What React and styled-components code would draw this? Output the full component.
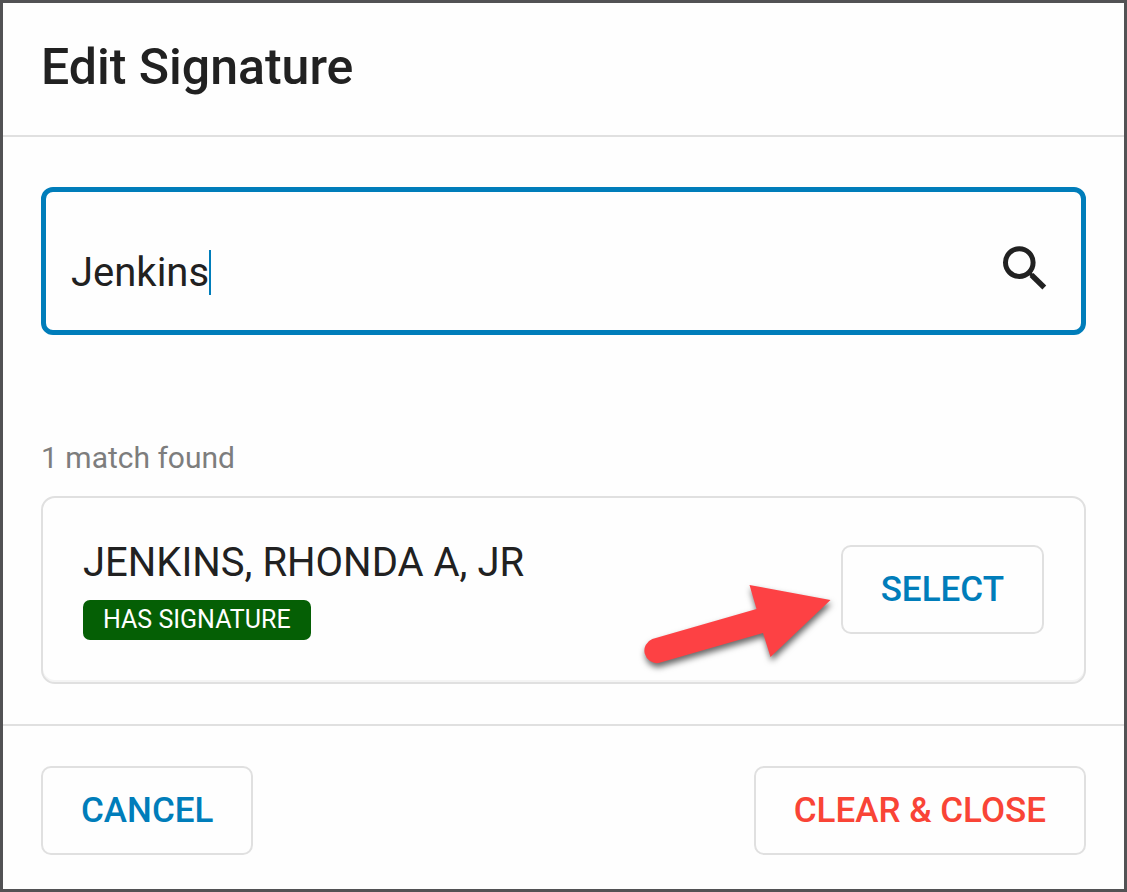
import { useState } from 'react';
import styled, { createGlobalStyle } from 'styled-components';

const people = [
  { id: 1, name: 'JENKINS, RHONDA A, JR', hasSignature: true },
];

const SearchIcon = () => (
  <IconSvg viewBox="0 0 60 60" aria-hidden="true">
    <circle cx="24.3" cy="23.6" r="13.8" strokeWidth="5" />
    <path d="M34 33.500L38 37.300" strokeWidth="3.5" />
    <path d="M36.500 36L49.300 48.500" strokeWidth="5.5" />
  </IconSvg>
);

const PointerArrow = () => (
  <ArrowSvg viewBox="0 0 200 90" aria-hidden="true">
    <path d="M108.500 0L189.500 15L129.500 72L122 48L17.700 78A12.500 12.500 0 0 1 11.300 54L115.500 24Z" />
  </ArrowSvg>
);

const App = () => {
  const [query, setQuery] = useState('Jenkins');

  const matches = people.filter((person) =>
    person.name.toLowerCase().includes(query.toLowerCase())
  );

  return (
    <>
      <GlobalStyle />
      <Dialog role="dialog" aria-labelledby="dialog-title">
        <Header>
          <Title id="dialog-title">Edit Signature</Title>
        </Header>
        <Body>
          <SearchField>
            <InputWrapper>
              <SearchInput
                value={query}
                onChange={(e) => setQuery(e.target.value)}
                aria-label="Search by name"
                id="search"
              />
              <Caret />
            </InputWrapper>
            <SearchIcon />
          </SearchField>
          <MatchCount>
            {matches.length} {matches.length === 1 ? 'match' : 'matches'} found
          </MatchCount>
          {matches.map((person) => (
            <ResultCard key={person.id}>
              <PersonInfo>
                <PersonName>{person.name}</PersonName>
                {person.hasSignature && <Badge>HAS SIGNATURE</Badge>}
              </PersonInfo>
              <SelectContainer>
                <PointerArrow />
                <Button type="button">SELECT</Button>
              </SelectContainer>
            </ResultCard>
          ))}
        </Body>
        <Footer>
          <Button type="button">CANCEL</Button>
          <Button type="button" $danger>CLEAR &amp; CLOSE</Button>
        </Footer>
      </Dialog>
    </>
  );
};

export default App;

const GlobalStyle = createGlobalStyle`
  * {
    box-sizing: border-box;
  }
  body {
    margin: 0;
    background-color: #fefefe;
    font-family: Roboto, "Liberation Sans", sans-serif;
    color: #212121;
  }
`;

const Dialog = styled.div`
  display: flex;
  flex-direction: column;
  min-height: 100vh;
  border: 3px solid #525254;
`;

const Header = styled.header`
  padding: 34px 38px 38px;
  border-bottom: 2px solid #e0e0e0;
`;

const Title = styled.h1`
  margin: 0;
  font-size: 50px;
  font-weight: 500;
  line-height: 60px;
`;

const Body = styled.main`
  flex: 1;
  padding: 50px 38px 40px;
`;

const SearchField = styled.label`
  display: flex;
  align-items: center;
  justify-content: space-between;
  padding: 47px 26px 31px 25px;
  border: 5px solid #007dba;
  border-radius: 12px;
`;

const InputWrapper = styled.span`
  display: flex;
  align-items: center;
  min-width: 0;
  padding-top: 6px;
`;

const SearchInput = styled.input`
  field-sizing: content;
  height: 54px;
  padding: 0;
  border: 0;
  outline: 0;
  background: none;
  font-family: inherit;
  font-size: 40px;
  color: inherit;
  caret-color: transparent;
`;

const Caret = styled.span`
  width: 2px;
  height: 45px;
  background-color: #007dba;
`;

const IconSvg = styled.svg`
  flex: none;
  width: 60px;
  height: 60px;
  fill: none;
  stroke: #212121;
`;

const MatchCount = styled.p`
  margin: 103px 0 18px;
  font-size: 30px;
  line-height: 40px;
  color: #7d7d7d;
`;

const ResultCard = styled.section`
  display: flex;
  align-items: center;
  justify-content: space-between;
  padding: 40px 40px 42px;
  border: 2px solid #e0e0e0;
  border-radius: 14px;
  box-shadow: inset 0 -2px 0 #f4f4f4;
`;

const PersonInfo = styled.div`
  display: flex;
  flex-direction: column;
  align-items: flex-start;
  gap: 12px;
`;

const PersonName = styled.div`
  font-size: 40px;
  line-height: 50px;
`;

const Badge = styled.span`
  padding: 0 20px;
  border-radius: 7px;
  background-color: #055f05;
  color: #fff;
  font-size: 25px;
  line-height: 40px;
`;

const SelectContainer = styled.div`
  position: relative;
`;

const ArrowSvg = styled.svg`
  position: absolute;
  right: 100%;
  top: 40px;
  width: 200px;
  height: 90px;
  overflow: visible;
  fill: #fd4144;
  filter: drop-shadow(1px 4px 3px rgba(0,0,0,.6));
  pointer-events: none;
`;

const Button = styled.button`
  padding: 20px 38px;
  border: 2px solid #e0e0e0;
  border-radius: 10px;
  background-color: #fefefe;
  font-family: inherit;
  font-size: 35px;
  font-weight: 500;
  line-height: 45px;
  color: ${(props) => (props.$danger ? '#f94436' : '#007dba')};
  cursor: pointer;
`;

const Footer = styled.footer`
  display: flex;
  justify-content: space-between;
  padding: 40px 38px 34px;
  border-top: 2px solid #e0e0e0;
`;
